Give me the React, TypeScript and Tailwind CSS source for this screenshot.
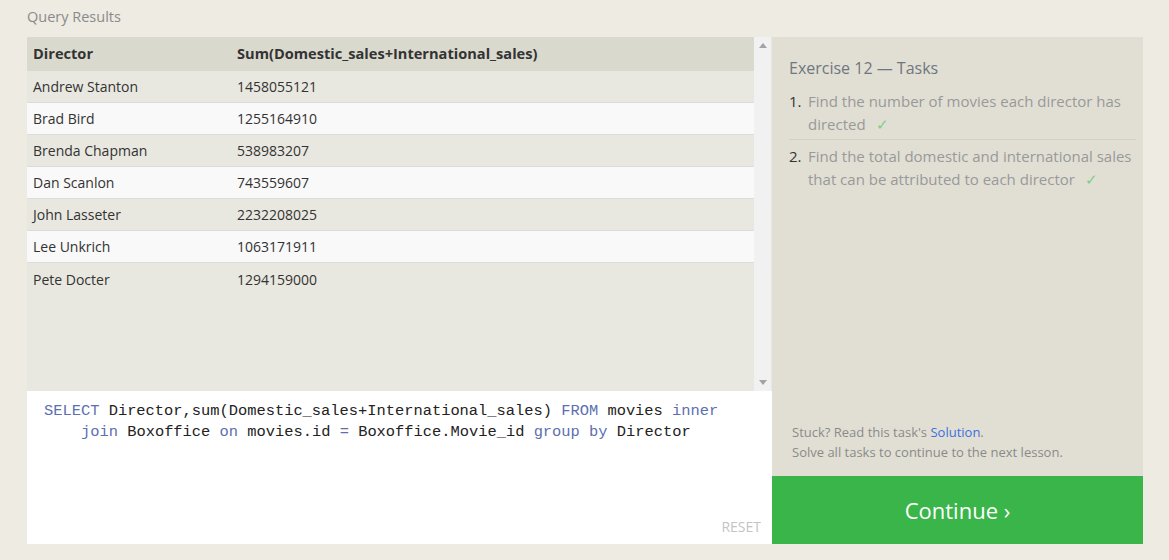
import React from "react";

const rows: [string, string][] = [
  ["Andrew Stanton", "1458055121"],
  ["Brad Bird", "1255164910"],
  ["Brenda Chapman", "538983207"],
  ["Dan Scanlon", "743559607"],
  ["John Lasseter", "2232208025"],
  ["Lee Unkrich", "1063171911"],
  ["Pete Docter", "1294159000"],
];

const K = ({ children }: { children: React.ReactNode }) => (
  <span className="text-[#5c6fb0]">{children}</span>
);

export default function App() {
  return (
    <div
      className="w-[1169px] h-[560px] bg-[#eeebe3] overflow-hidden"
      style={{ fontFamily: '"Open Sans", "Noto Sans", sans-serif' }}
    >
      <div className="pl-[27px] pt-[7px] h-[37px] text-[14.5px] text-[#8a8a8a] leading-[20px]">
        Query Results
      </div>
      <div className="ml-[27px] w-[1116px] h-[507px] flex">
        {/* Left */}
        <div className="w-[745px] flex flex-col">
          <div className="h-[354px] flex bg-[#e9e8e0]">
            <div className="w-[727px]">
              <div className="h-[34px] flex items-center bg-[#dad9ce] text-[14.6px] font-bold text-[#333]">
                <div className="w-[204px] pl-[6px]">Director</div>
                <div className="pl-[6px]">Sum(Domestic_sales+International_sales)</div>
              </div>
              {rows.map(([a, b], i) => (
                <div
                  key={a}
                  className={`h-[32px] flex items-center text-[14px] text-[#333] border-b border-[#dcdcdc] ${
                    i % 2 === 0 ? "bg-[#e9e8e0]" : "bg-[#f9f9f9]"
                  } ${i === rows.length - 1 ? "border-b-0" : ""}`}
                >
                  <div className="w-[204px] pl-[6px]">{a}</div>
                  <div className="pl-[6px]">{b}</div>
                </div>
              ))}
            </div>
            <div className="w-[17px] bg-[#f1f1f1] flex flex-col justify-between items-center py-[6px]">
              <svg width="8" height="5" viewBox="0 0 8 5">
                <path d="M0 5 L4 0 L8 5 Z" fill="#a3a3a3" />
              </svg>
              <svg width="8" height="5" viewBox="0 0 8 5">
                <path d="M0 0 L4 5 L8 0 Z" fill="#a3a3a3" />
              </svg>
            </div>
          </div>
          <div className="flex-1 bg-white relative pl-[17px] pr-[20px] pt-[10px]">
            <div
              className="text-[15.4px] leading-[21px] text-[#222] pl-[37px] -indent-[37px]"
              style={{ fontFamily: '"Liberation Mono", "DejaVu Sans Mono", monospace' }}
            >
              <K>SELECT</K> Director,sum(Domestic_sales+International_sales) <K>FROM</K> movies <K>inner</K>{" "}
              <K>join</K> Boxoffice <K>on</K> movies.id <K>=</K> Boxoffice.Movie_id <K>group by</K> Director
            </div>
            <div className="absolute right-[11px] bottom-[7px] text-[14px] text-[#c4c4c4]">RESET</div>
          </div>
        </div>
        {/* Right */}
        <div className="w-[371px] flex flex-col">
          <div className="flex-1 bg-[#e1dfd4] pl-[17px] pr-[7px] flex flex-col">
            <div className="pt-[20px] text-[16px] text-[#6f7680] leading-[22px]">Exercise 12 — Tasks</div>
            <ol className="mt-[11px] text-[15px] leading-[23px] text-[#999]">
              <li className="flex pb-[3px] border-b border-[#d3d1c6]">
                <span className="w-[19px] text-[#333] text-[15px]">1.</span>
                <span className="flex-1">
                  Find the number of movies each director has directed
                  <span className="text-[#7ece88] ml-[10px]">✓</span>
                </span>
              </li>
              <li className="flex pt-[5px]">
                <span className="w-[19px] text-[#333] text-[15px]">2.</span>
                <span className="flex-1">
                  Find the total domestic and international sales that can be attributed to each director
                  <span className="text-[#7ece88] ml-[10px]">✓</span>
                </span>
              </li>
            </ol>
            <div className="mt-auto pb-[14px] pl-[3px] text-[13px] leading-[20px] text-[#8a8a8a]">
              <div>
                Stuck? Read this task's <span className="text-[#3b6fe0]">Solution</span>.
              </div>
              <div>Solve all tasks to continue to the next lesson.</div>
            </div>
          </div>
          <div className="h-[68px] bg-[#3ab54a] flex items-center justify-center text-white text-[22px]">
            Continue ›
          </div>
        </div>
      </div>
    </div>
  );
}
